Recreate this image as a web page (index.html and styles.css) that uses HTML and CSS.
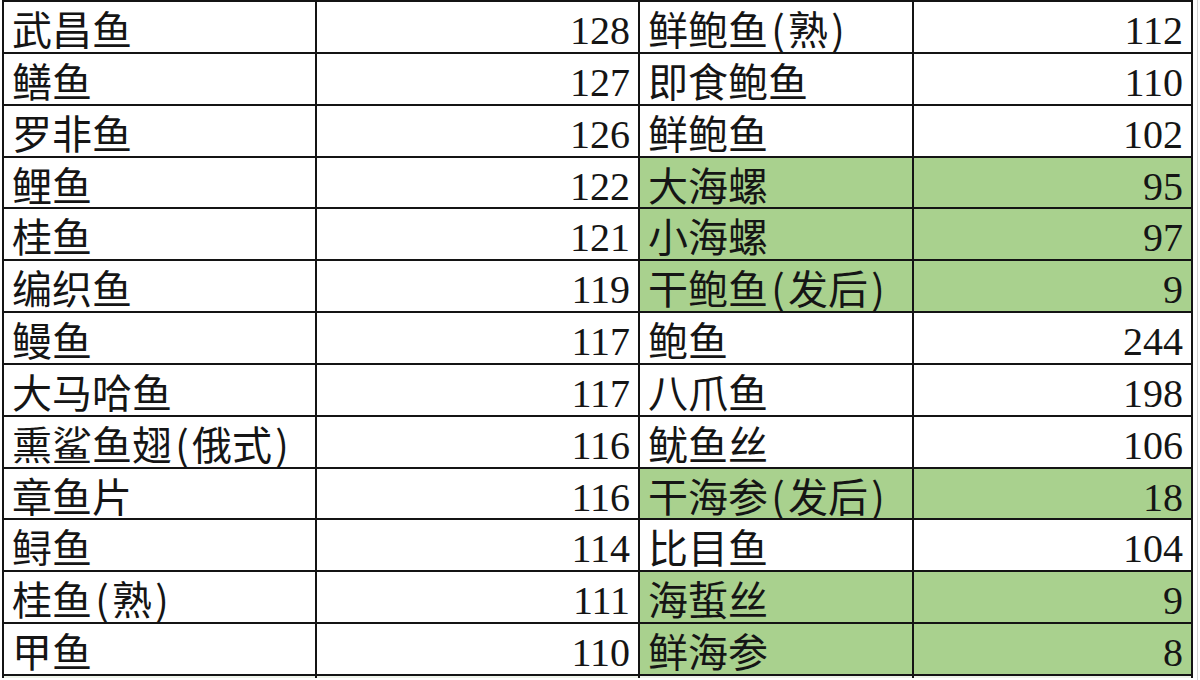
FILE: index.html
```html
<!DOCTYPE html>
<html lang="zh-CN">
<head>
<meta charset="utf-8">
<title>表格</title>
<link rel="stylesheet" href="styles.css">
</head>
<body>
<div class="page">
  <div class="sheet">
    <div class="cell name">武昌鱼</div><div class="cell num">128</div><div class="cell name">鲜鲍鱼<span class="pn">(</span>熟<span class="pn">)</span></div><div class="cell num">112</div>
    <div class="cell name">鳝鱼</div><div class="cell num">127</div><div class="cell name">即食鲍鱼</div><div class="cell num">110</div>
    <div class="cell name">罗非鱼</div><div class="cell num">126</div><div class="cell name">鲜鲍鱼</div><div class="cell num">102</div>
    <div class="cell name">鲤鱼</div><div class="cell num">122</div><div class="cell name green">大海螺</div><div class="cell num green">95</div>
    <div class="cell name">桂鱼</div><div class="cell num">121</div><div class="cell name green">小海螺</div><div class="cell num green">97</div>
    <div class="cell name">编织鱼</div><div class="cell num">119</div><div class="cell name green">干鲍鱼<span class="pn">(</span>发后<span class="pn">)</span></div><div class="cell num green">9</div>
    <div class="cell name">鳗鱼</div><div class="cell num">117</div><div class="cell name">鲍鱼</div><div class="cell num">244</div>
    <div class="cell name">大马哈鱼</div><div class="cell num">117</div><div class="cell name">八爪鱼</div><div class="cell num">198</div>
    <div class="cell name">熏鲨鱼翅<span class="pn">(</span>俄式<span class="pn">)</span></div><div class="cell num">116</div><div class="cell name">鱿鱼丝</div><div class="cell num">106</div>
    <div class="cell name">章鱼片</div><div class="cell num">116</div><div class="cell name green">干海参<span class="pn">(</span>发后<span class="pn">)</span></div><div class="cell num green">18</div>
    <div class="cell name">鲟鱼</div><div class="cell num">114</div><div class="cell name">比目鱼</div><div class="cell num">104</div>
    <div class="cell name">桂鱼<span class="pn">(</span>熟<span class="pn">)</span></div><div class="cell num">111</div><div class="cell name green">海蜇丝</div><div class="cell num green">9</div>
    <div class="cell name">甲鱼</div><div class="cell num">110</div><div class="cell name green">鲜海参</div><div class="cell num green">8</div>
    <div class="cell tail"></div><div class="cell tail"></div><div class="cell tail"></div><div class="cell tail"></div>
  </div>
  <div class="edge"></div>
</div>
</body>
</html>
```

FILE: styles.css
```css
html, body {
  margin: 0;
  padding: 0;
  background: #ffffff;
  overflow: hidden;
  width: 1200px;
  height: 680px;
}

.page {
  display: flex;
  align-items: stretch;
  height: 680px;
}

.sheet {
  display: grid;
  grid-template-columns: 311px 321px 272px 277px;
  grid-template-rows: repeat(13, 49.85px) 2px;
  gap: 2px;
  padding: 2px 2px 0 2px;
  margin-left: 2px;
  background: #141414;
  align-content: start;
  height: max-content;
}

.cell {
  background: #ffffff;
  color: #151515;
  font-size: 40px;
  white-space: nowrap;
  box-sizing: border-box;
}

.name {
  font-family: "Noto Sans CJK SC", "Noto Sans", sans-serif;
  font-weight: 400;
  line-height: 40px;
  padding-top: 6px;
  padding-left: 8px;
}

.num {
  font-family: "Liberation Serif", "Noto Sans CJK SC", serif;
  text-align: right;
  line-height: 40px;
  padding-top: 9px;
  padding-right: 8px;
}

.pn {
  display: inline-block;
  width: 20px;
  text-align: center;
}

.green {
  background: #a9d18e;
}

.tail {
  background: #eef3ea;
}

.edge {
  width: 1px;
  margin-left: 4px;
  background: #d4d4d4;
}
```
